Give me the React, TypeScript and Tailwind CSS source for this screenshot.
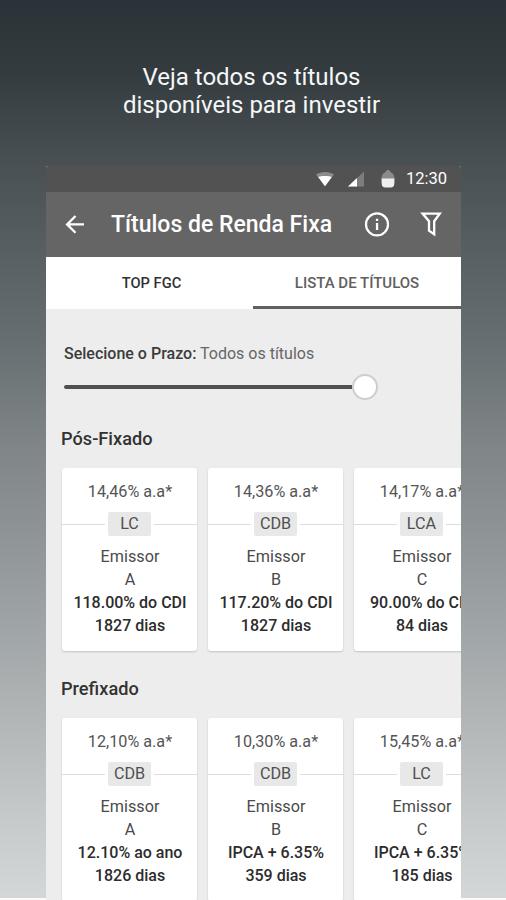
import { Fragment } from 'react';

type Bond = {
  rate: string;
  kind: string;
  issuer: string;
  yieldText: string;
  term: string;
};

const posFixado: Bond[] = [
  { rate: '14,46% a.a*', kind: 'LC', issuer: 'A', yieldText: '118.00% do CDI', term: '1827 dias' },
  { rate: '14,36% a.a*', kind: 'CDB', issuer: 'B', yieldText: '117.20% do CDI', term: '1827 dias' },
  { rate: '14,17% a.a*', kind: 'LCA', issuer: 'C', yieldText: '90.00% do CDI', term: '84 dias' },
];

const prefixado: Bond[] = [
  { rate: '12,10% a.a*', kind: 'CDB', issuer: 'A', yieldText: '12.10% ao ano', term: '1826 dias' },
  { rate: '10,30% a.a*', kind: 'CDB', issuer: 'B', yieldText: 'IPCA + 6.35%', term: '359 dias' },
  { rate: '15,45% a.a*', kind: 'LC', issuer: 'C', yieldText: 'IPCA + 6.35%', term: '185 dias' },
];

function StatusBar() {
  return (
    <div className="flex h-[26px] shrink-0 items-center justify-end bg-[#525252] pr-[14px] text-white">
      <svg className="mr-[14px] h-[16px] w-[18px]" viewBox="0 0 18 16">
        <path d="M0 3.6C5 .2 13 .2 18 3.6L9 15.2Z" fill="#8c8c8c" />
        <path d="M2.2 6C6 4.6 12 4.6 15.8 6L9 15.2Z" fill="#fff" />
      </svg>
      <svg className="mr-[17px] h-[16px] w-[16px]" viewBox="0 0 16 16">
        <path d="M0 15.4L16 .4V15.4Z" fill="#7d7d7d" />
        <path d="M0 15.4L9 7V15.4Z" fill="#fff" />
      </svg>
      <svg className="mr-[11px] h-[18px] w-[14px]" viewBox="0 0 14 18">
        <path d="M.6 9V7.4C.6 5 2 3.4 4 2.4C5 1.8 5 0 7 0S9 1.8 10 2.4C12 3.4 13.4 5 13.4 7.4V9Z" fill="#8a8a8a" />
        <path d="M.6 8.4H13.4V13C13.4 16 12 17.6 9.6 17.6H4.4C2 17.6 .6 16 .6 13Z" fill="#f0f0f0" />
      </svg>
      <span className="text-[16.5px] leading-none">12:30</span>
    </div>
  );
}

function AppBar() {
  return (
    <header className="flex h-[65px] shrink-0 items-center bg-[#656565] pr-[19px] pl-[19px] text-white">
      <svg className="h-[20px] w-[20px]" viewBox="0 0 20 20" fill="none" stroke="#fff" strokeWidth="2.3">
        <path d="M19 9.4H2.5M10.5 1L2.1 9.4L10.5 17.8" />
      </svg>
      <h1 className="ml-[26px] flex-1 pt-px text-[23px] font-medium whitespace-nowrap">Títulos de Renda Fixa</h1>
      <svg className="h-[26px] w-[26px]" viewBox="0 0 26 26">
        <circle cx="13" cy="12.4" r="11" fill="none" stroke="#fff" strokeWidth="2.2" />
        <path d="M11.9 6.8H14.2V9.1H11.9ZM11.9 11H14.2V18H11.9Z" fill="#fff" />
      </svg>
      <svg className="ml-[30px] h-[26px] w-[22px]" viewBox="0 0 22 26" fill="none" stroke="#fff" strokeWidth="2.3">
        <path d="M2.6 1.6H19.8L14.2 9.2V22.2L9 18.6V9.2Z" />
      </svg>
    </header>
  );
}

function Tabs() {
  return (
    <nav className="flex h-[52px] shrink-0 bg-white font-medium">
      <div className="flex w-[207px] items-center justify-center pl-[4px] text-[14.7px] text-[#303030]">TOP FGC</div>
      <div className="flex flex-1 items-center justify-center border-b-[3px] border-[#606060] pt-[3px] text-[15px] text-[#606060]">
        LISTA DE TÍTULOS
      </div>
    </nav>
  );
}

function TermSlider() {
  return (
    <div className="px-[18px] pt-[34px]">
      <p className="text-[16px] leading-[22px] text-[#666]">
        <span className="font-medium text-[#3c3c3c]">Selecione o Prazo:</span> Todos os títulos
      </p>
      <div className="mt-[9px] flex h-[26px] items-center">
        <div className="h-[4px] w-[288px] rounded-l-full bg-[#505050]" />
        <div className="size-[26px] rounded-full border-2 border-[#cecece] bg-white" />
      </div>
    </div>
  );
}

function BondCard({ bond }: { bond: Bond }) {
  return (
    <article className="h-[183px] w-[135px] shrink-0 rounded-[3px] bg-white text-center text-[16.2px] leading-[23px] whitespace-nowrap shadow-[0_1px_2px_rgba(0,0,0,0.18)]">
      <p className="pt-[12px] pl-px text-[#555]">{bond.rate}</p>
      <div className="mt-[9px] flex h-[24px] items-center gap-[3px]">
        <div className="h-px flex-1 bg-[#dcdcdc]" />
        <span className="w-[43px] rounded-[2px] bg-[#e8e8e8] leading-[24px] text-[#505050]">{bond.kind}</span>
        <div className="h-px flex-1 bg-[#dcdcdc]" />
      </div>
      <div className="mt-[9px] flex flex-col items-center pl-px text-[#4a4a4a]">
        <span>Emissor</span>
        <span>{bond.issuer}</span>
        <span className="text-[16px] font-medium text-[#2c2c2c]">{bond.yieldText}</span>
        <span className="text-[16px] font-medium text-[#2c2c2c]">{bond.term}</span>
      </div>
    </article>
  );
}

const sections = [
  { title: 'Pós-Fixado', bonds: posFixado },
  { title: 'Prefixado', bonds: prefixado },
];

export default function App() {
  return (
    <main className="flex h-[900px] w-[506px] flex-col items-center overflow-hidden bg-[linear-gradient(to_bottom,#2a3337_0px,#333b3f_70px,#4a5155_166px,#666e71_340px,#7f8587_443px,#8f9496_537px,#a0a5a7_632px,#b3b7b8_726px,#c6cacb_820px,#d3d7d8_898px,#fafafa_898px)] font-['Roboto',sans-serif]">
      <h2 className="h-[166px] shrink-0 pr-[3px] pt-[63px] text-center text-[24px] leading-[28px] text-[#f5f7f8]">
        Veja todos os títulos
        <br />
        disponíveis para investir
      </h2>
      <div className="ml-px flex h-[734px] w-[415px] shrink-0 flex-col overflow-hidden rounded-t-[2px] bg-[#ededed]">
        <StatusBar />
        <AppBar />
        <Tabs />
        <TermSlider />
        <div className="pt-[26px]">
          {sections.map((section) => (
            <Fragment key={section.title}>
              <h3 className="px-[15px] text-[18.2px] leading-[26px] font-medium text-[#333]">{section.title}</h3>
              <div className="mt-[16px] mb-[25px] flex gap-[11px] pl-[16px]">
                {section.bonds.map((bond) => (
                  <BondCard key={bond.issuer} bond={bond} />
                ))}
              </div>
            </Fragment>
          ))}
        </div>
      </div>
    </main>
  );
}
